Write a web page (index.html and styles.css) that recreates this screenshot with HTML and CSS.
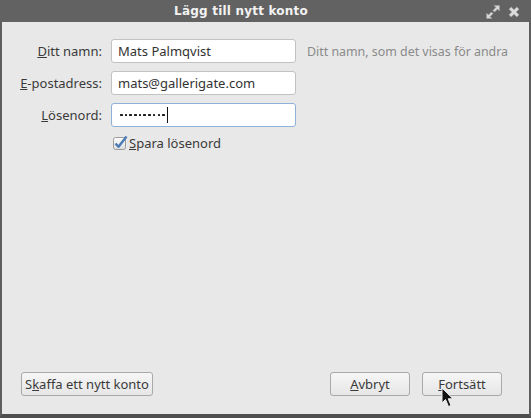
FILE: index.html
```html
<!DOCTYPE html>
<html lang="sv">
<head>
<meta charset="utf-8">
<title>Lägg till nytt konto</title>
<link rel="stylesheet" href="styles.css">
</head>
<body>
<div class="window">
  <div class="titlebar">
    <span class="title">Lägg till nytt konto</span>
    <div class="controls">
      <svg class="ctl" width="16" height="16" viewBox="0 0 16 16">
        <g fill="#d8d8d8" stroke="#9a9a9a" stroke-width="0.6">
          <path d="M9 1.5 L14.5 1.5 L14.5 7 L12.6 5.1 L9.6 8.1 L7.9 6.4 L10.9 3.4 Z"/>
          <path d="M7 14.5 L1.5 14.5 L1.5 9 L3.4 10.9 L6.4 7.9 L8.1 9.6 L5.1 12.6 Z"/>
        </g>
      </svg>
      <svg class="ctl" width="14" height="14" viewBox="0 0 14 14">
        <path d="M2 4.2 L4.2 2 L7 4.8 L9.8 2 L12 4.2 L9.2 7 L12 9.8 L9.8 12 L7 9.2 L4.2 12 L2 9.8 L4.8 7 Z" fill="#dcdcdc" stroke="#a0a0a0" stroke-width="0.6"/>
      </svg>
    </div>
  </div>
  <div class="content">
    <div class="form">
      <label class="lbl"><u>D</u>itt namn:</label>
      <div class="field">Mats Palmqvist</div>
      <div class="hint">Ditt namn, som det visas för andra</div>

      <label class="lbl"><u>E</u>-postadress:</label>
      <div class="field">mats@gallerigate.com</div>
      <div></div>

      <label class="lbl"><u>L</u>ösenord:</label>
      <div class="field focus"><span class="dots"><i></i><i></i><i></i><i></i><i></i><i></i><i></i><i></i><i></i><i></i></span><span class="caret"></span></div>
      <div></div>

      <div></div>
      <div class="check">
        <svg class="box" width="16" height="16" viewBox="0 0 16 16">
          <defs>
            <linearGradient id="cb" x1="0" y1="0" x2="0" y2="1">
              <stop offset="0" stop-color="#fdfdfd"/>
              <stop offset="1" stop-color="#dcdcdc"/>
            </linearGradient>
          </defs>
          <rect x="1.5" y="2.5" width="12" height="12" rx="2" fill="url(#cb)" stroke="#9c9c9c"/>
          <path d="M3.5 8.5 L6.5 11.8 L14.5 1.5" fill="none" stroke="#4a7bb5" stroke-width="2.4" stroke-linejoin="round"/>
        </svg>
        <span><u>S</u>para lösenord</span>
      </div>
      <div></div>
    </div>
    <div class="footer">
      <button class="btn">S<u>k</u>affa ett nytt konto</button>
      <div class="right">
        <button class="btn wide"><u>A</u>vbryt</button>
        <button class="btn wide"><u>F</u>ortsätt</button>
      </div>
    </div>
  </div>
  <svg class="cursor" width="14" height="22" viewBox="0 0 14 22">
    <path d="M1 1 L1 16 L4.5 12.5 L7.5 19.5 L10 18.5 L7.2 11.8 L12 11.8 Z" fill="#111" stroke="#eee" stroke-width="1"/>
  </svg>
</div>
</body>
</html>
```
FILE: styles.css
```css
html, body {
  margin: 0;
  padding: 0;
}
body {
  width: 531px;
  height: 418px;
  overflow: hidden;
  background: #e8e8e8;
}
.window {
  position: relative;
  box-sizing: border-box;
  width: 531px;
  height: 418px;
  display: flex;
  flex-direction: column;
  border-left: 2px solid #5e5e5e;
  border-right: 2px solid #5e5e5e;
  border-bottom: 4px solid #4e4e4e;
  background: #e8e8e8;
  font-family: "Noto Sans", "Open Sans", sans-serif;
  font-size: 13px;
  color: #3a3a3a;
}
.titlebar {
  height: 22px;
  margin: 0 -2px;
  background: #626262;
  display: flex;
  align-items: center;
  justify-content: center;
  position: relative;
  padding-right: 49px;
}
.title {
  font-family: "DejaVu Sans", sans-serif;
  font-weight: bold;
  font-size: 12px;
  color: #f2f2f2;
  letter-spacing: 0.2px;
}
.controls {
  position: absolute;
  right: 10px;
  top: 4px;
  display: flex;
  align-items: center;
  gap: 6px;
}
.content {
  flex: 1;
  display: flex;
  flex-direction: column;
  justify-content: space-between;
}
.form {
  display: grid;
  grid-template-columns: 92px 185px auto;
  column-gap: 9px;
  row-gap: 8px;
  padding: 17px 0 0 8px;
  align-items: center;
}
.lbl {
  text-align: right;
  white-space: nowrap;
}
.field {
  box-sizing: border-box;
  height: 24px;
  background: #ffffff;
  border: 1px solid #c2c2c2;
  border-radius: 3px;
  padding: 0 6px;
  display: flex;
  align-items: center;
  color: #333;
}
.field.focus {
  border-color: #8eb1da;
  padding-left: 8px;
}
.dots {
  display: flex;
  gap: 2.2px;
  align-items: center;
}
.dots i {
  display: block;
  width: 2.5px;
  height: 2.5px;
  background: #1e1e1e;
  border-radius: 0.5px;
}
.caret {
  display: inline-block;
  width: 1px;
  height: 16px;
  background: #111;
  margin-left: 2px;
}
.hint {
  color: #8a8a8a;
  font-size: 12.4px;
  padding-left: 2px;
  white-space: nowrap;
}
.check {
  display: flex;
  align-items: center;
  height: 15px;
  padding-left: 1px;
  gap: 1px;
}
.box {
  flex: none;
}
.footer {
  display: flex;
  justify-content: space-between;
  align-items: center;
  padding: 0 27px 18px 19px;
}
.right {
  display: flex;
  gap: 12px;
}
.btn {
  box-sizing: border-box;
  height: 24px;
  padding: 0 3px;
  font-family: "Noto Sans", "Open Sans", sans-serif;
  font-size: 13px;
  color: #3a3a3a;
  background: linear-gradient(#f6f6f6, #e6e6e6);
  border: 1px solid #a9a9a9;
  border-radius: 3px;
}
.btn.wide {
  width: 80px;
}
.cursor {
  position: absolute;
  left: 439px;
  top: 387px;
}
```
